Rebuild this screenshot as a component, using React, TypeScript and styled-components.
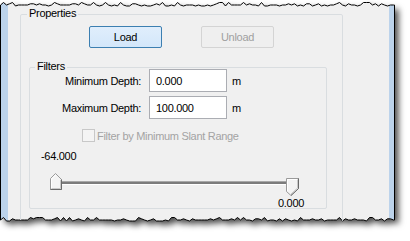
import styled, { createGlobalStyle } from 'styled-components';

type Pt = [number, number];

// deterministic jagged line for the torn screenshot edges
const jagged = (seed: number, base: number, from: number, to: number): Pt[] => {
    let s = seed;
    const next = () => {
        s = (s * 16807) % 2147483647;
        return s / 2147483647;
    };
    const pts: Pt[] = [[from, base]];
    for (let x = from + 3; x < to; x += 3) {
        const v = next();
        const dy = v < 0.12 ? -2.5 : v < 0.32 ? -1.2 : v < 0.8 ? 0 : 1;
        pts.push([x, base + dy]);
    }
    pts.push([to, base]);
    return pts;
};

const TOP_EDGE = jagged(11, 5, 0.5, 394.5);
const BOTTOM_EDGE = jagged(29, 220, 0.5, 394.5).reverse();
const OUTLINE = [...TOP_EDGE, ...BOTTOM_EDGE];
const svgPoints = OUTLINE.map(([x, y]) => `${x},${y}`).join(' ');
const cssPolygon = `polygon(${OUTLINE.map(([x, y]) => `${x}px ${y}px`).join(', ')})`;

const GlobalStyle = createGlobalStyle`
  html, body {
    margin: 0;
    padding: 0;
    background: #ffffff;
  }
  body {
    font-family: 'Liberation Sans', Arial, sans-serif;
    font-size: 11px;
    letter-spacing: -0.3px;
    color: #000;
  }
`;

const Shell = styled.div`
  position: relative;
  width: 410px;
  height: 241px;
  overflow: hidden;
`;

const Backdrop = styled.svg`
  position: absolute;
  left: 0;
  top: 0;
`;

const FrameShape = styled.polygon`
  filter: drop-shadow(4px 4px 3px rgba(0, 0, 0, 0.7));
`;

const Content = styled.div<{ $clip: string }>`
  position: relative;
  box-sizing: border-box;
  width: 410px;
  height: 241px;
  padding: 14px 0 0 20px;
  clip-path: ${p => p.$clip};
`;

const Group = styled.div<{ $width: number; $height: number }>`
  position: relative;
  box-sizing: border-box;
  width: ${p => p.$width}px;
  height: ${p => p.$height}px;
  border: 1px solid #d9dde0;
  border-radius: 2px;
`;

const Legend = styled.span<{ $left: number }>`
  position: absolute;
  top: -8px;
  left: ${p => p.$left}px;
  padding: 0 2px;
  line-height: 13px;
  background: #f0f0f0;
`;

const ButtonRow = styled.div`
  display: flex;
  justify-content: center;
  gap: 39px;
  margin-top: 11px;
`;

const Button = styled.button<{ $focused?: boolean }>`
  box-sizing: border-box;
  width: 73px;
  height: 22px;
  padding: 0;
  font: inherit;
  letter-spacing: inherit;
  border-radius: 2px;
  border: 1px solid ${p => (p.$focused ? '#3c7fb1' : '#d4d4d4')};
  background: ${p => (p.$focused ? 'linear-gradient(#e0eefc, #d3e7fa)' : '#efefef')};
  color: ${p => (p.$focused ? '#000' : '#a0a0a0')};
`;

const FiltersBox = styled(Group)`
  margin: 19px 0 0 8px;
`;

const DepthRow = styled.div<{ $gap: number }>`
  display: flex;
  align-items: center;
  height: 23px;
  margin-top: ${p => p.$gap}px;
`;

const DepthLabel = styled.span`
  width: 111px;
  text-align: right;
`;

const DepthInput = styled.input`
  box-sizing: border-box;
  width: 78px;
  height: 23px;
  margin: 0 5px 0 8px;
  padding: 0 0 0 6px;
  font: inherit;
  letter-spacing: inherit;
  color: #000;
  background: #fff;
  border: 1px solid #abadb3;
  outline: none;
`;

const CheckRow = styled.label`
  display: flex;
  align-items: center;
  gap: 2px;
  height: 13px;
  margin: 10px 0 0 52px;
  color: #a3a3a3;
`;

const CheckBox = styled.span`
  box-sizing: border-box;
  width: 13px;
  height: 13px;
  border: 1px solid #c8c8c8;
  background: #f4f4f4;
`;

const RangeValue = styled.div<{ $top: number; $left: number }>`
  line-height: 13px;
  margin: ${p => p.$top}px 0 0 ${p => p.$left}px;
`;

const Slider = styled.div`
  position: relative;
  width: 248px;
  height: 24px;
  margin: 9px 0 0 20px;
`;

const Track = styled.div`
  position: absolute;
  left: 11px;
  right: 11px;
  top: 9px;
  height: 2px;
  border-top: 1px solid #a8a8a8;
  border-bottom: 1px solid #ffffff;
  background: #7c7c7c;
`;

const Thumb = styled.svg<{ $left: number; $top: number }>`
  position: absolute;
  left: ${p => p.$left}px;
  top: ${p => p.$top}px;
`;

const UpThumb = () => (
    <Thumb $left={0} $top={1} width="12" height="17" viewBox="0 0 12 17">
        <path d="M0.5 16.5V5.5L5.5 0.5L11.5 6.5V16.5Z" fill="#f4f4f4" stroke="#9a9a9a" />
        <path d="M1.5 15.5V6L5.5 2" fill="none" stroke="#ffffff" />
        <path d="M11.5 6.5V16.5H0.5" fill="none" stroke="#6a6a6a" />
        <path d="M10.5 7V15.5H1.5" fill="none" stroke="#c9c9c9" />
    </Thumb>
);

const DownThumb = () => (
    <Thumb $left={236} $top={6} width="13" height="18" viewBox="0 0 13 18">
        <path d="M0.5 0.5H12.5V10.5L5 17.5L0.5 13.5Z" fill="#f4f4f4" stroke="#9a9a9a" />
        <path d="M1.5 13V1.5H11.5" fill="none" stroke="#ffffff" />
        <path d="M12.5 0.5V10.5L5 17.5" fill="none" stroke="#6a6a6a" />
        <path d="M11.5 1.5V10L5 16" fill="none" stroke="#c9c9c9" />
    </Thumb>
);

const WindowFrame = () => (
    <Backdrop width="410" height="241" viewBox="0 0 410 241">
        <defs>
            <clipPath id="frame-clip">
                <polygon points={svgPoints} />
            </clipPath>
        </defs>
        <FrameShape points={svgPoints} fill="#f0f0f0" />
        <g clipPath="url(#frame-clip)">
            <rect x="1" y="0" width="7" height="241" fill="#bcd3eb" />
            <rect x="389" y="0" width="5" height="241" fill="#bcd3eb" />
        </g>
        <polygon points={svgPoints} fill="none" stroke="#000" strokeWidth="1" />
    </Backdrop>
);

export default function App() {
    return (
        <Shell>
            <GlobalStyle />
            <WindowFrame />
            <Content $clip={cssPolygon}>
                <Group $width={323} $height={260}>
                    <Legend $left={6}>Properties</Legend>
                    <ButtonRow>
                        <Button $focused>Load</Button>
                        <Button disabled>Unload</Button>
                    </ButtonRow>
                    <FiltersBox $width={298} $height={142}>
                        <Legend $left={5}>Filters</Legend>
                        <DepthRow $gap={1}>
                            <DepthLabel>Minimum Depth:</DepthLabel>
                            <DepthInput readOnly value="0.000" />
                            <span>m</span>
                        </DepthRow>
                        <DepthRow $gap={4}>
                            <DepthLabel>Maximum Depth:</DepthLabel>
                            <DepthInput readOnly value="100.000" />
                            <span>m</span>
                        </DepthRow>
                        <CheckRow>
                            <CheckBox />
                            Filter by Minimum Slant Range
                        </CheckRow>
                        <RangeValue $top={8} $left={11}>-64.000</RangeValue>
                        <Slider>
                            <Track />
                            <UpThumb />
                            <DownThumb />
                        </Slider>
                        <RangeValue $top={1} $left={248}>0.000</RangeValue>
                    </FiltersBox>
                </Group>
            </Content>
        </Shell>
    );
}
